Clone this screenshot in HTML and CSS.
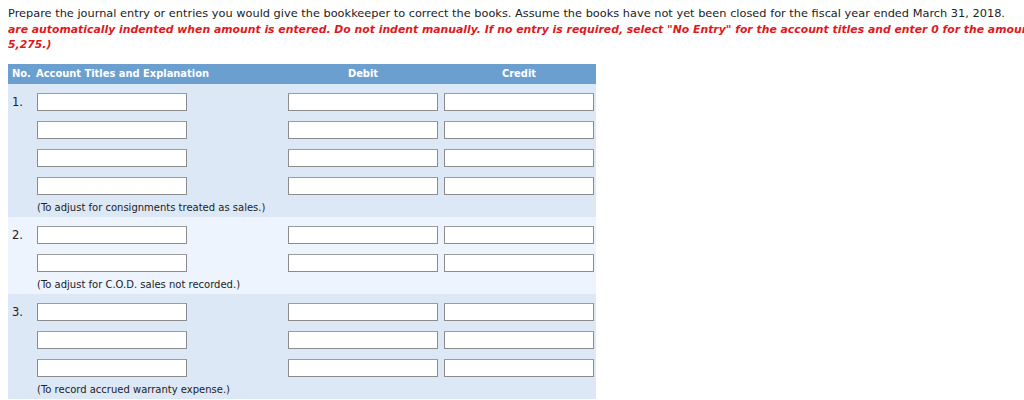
FILE: index.html
```html
<!DOCTYPE html>
<html lang="en">
<head>
<meta charset="utf-8">
<title>Journal entry</title>
<link rel="stylesheet" href="styles.css">
</head>
<body>
<div class="intro">
  <p class="line">Prepare the journal entry or entries you would give the bookkeeper to correct the books. Assume the books have not yet been closed for the fiscal year ended March 31, 2018.</p>
  <p class="line red">are automatically indented when amount is entered. Do not indent manually. If no entry is required, select "No Entry" for the account titles and enter 0 for the amounts.</p>
  <p class="line red">5,275.)</p>
</div>

<div class="journal">
  <div class="head">
    <div class="h-no">No.</div>
    <div class="h-acct">Account Titles and Explanation</div>
    <div class="h-amt">Debit</div>
    <div class="h-amt">Credit</div>
  </div>

  <div class="entry">
    <div class="row"><div class="num">1.</div><input class="field" type="text"><input class="field" type="text"><input class="field" type="text"></div>
    <div class="row"><div class="num"></div><input class="field" type="text"><input class="field" type="text"><input class="field" type="text"></div>
    <div class="row"><div class="num"></div><input class="field" type="text"><input class="field" type="text"><input class="field" type="text"></div>
    <div class="row"><div class="num"></div><input class="field" type="text"><input class="field" type="text"><input class="field" type="text"></div>
    <div class="expl">(To adjust for consignments treated as sales.)</div>
  </div>

  <div class="entry alt">
    <div class="row"><div class="num">2.</div><input class="field" type="text"><input class="field" type="text"><input class="field" type="text"></div>
    <div class="row"><div class="num"></div><input class="field" type="text"><input class="field" type="text"><input class="field" type="text"></div>
    <div class="expl">(To adjust for C.O.D. sales not recorded.)</div>
  </div>

  <div class="entry">
    <div class="row"><div class="num">3.</div><input class="field" type="text"><input class="field" type="text"><input class="field" type="text"></div>
    <div class="row"><div class="num"></div><input class="field" type="text"><input class="field" type="text"><input class="field" type="text"></div>
    <div class="row"><div class="num"></div><input class="field" type="text"><input class="field" type="text"><input class="field" type="text"></div>
    <div class="expl">(To record accrued warranty expense.)</div>
  </div>
</div>
</body>
</html>
```

FILE: styles.css
```css
html, body {
  overflow: hidden;
}
body {
  margin: 0;
  padding: 6px 8px 0 8px;
  background: #ffffff;
  color: #222222;
  font-family: "DejaVu Sans", Verdana, sans-serif;
}
.intro {
  margin-bottom: 11px;
}
.line {
  margin: 0;
  font-size: 11.35px;
  line-height: 15.5px;
  white-space: nowrap;
}
.red {
  color: #e0191b;
  font-size: 10.85px;
  font-weight: bold;
  font-style: italic;
}
.journal {
  width: 588px;
}
.head {
  display: grid;
  grid-template-columns: 28px 252px 156px 152px;
  align-items: center;
  height: 20px;
  background: #6b9fd0;
  color: #ffffff;
  font-family: "DejaVu Sans Condensed", "DejaVu Sans", sans-serif;
  font-stretch: condensed;
  font-size: 11px;
  font-weight: bold;
}
.h-no {
  padding-left: 4px;
}
.h-amt {
  width: 150px;
  text-align: center;
}
.entry {
  background: #dde8f7;
  padding: 9px 0 2px 0;
  display: flex;
  flex-direction: column;
  gap: 10px;
}
.entry.alt {
  background: #eef4fd;
}
.row {
  display: grid;
  grid-template-columns: 29px 251px 156px 152px;
  align-items: center;
  height: 18px;
}
.num {
  padding-left: 4px;
  font-size: 11.5px;
  color: #222222;
}
.field {
  box-sizing: border-box;
  width: 150px;
  height: 18px;
  margin: 0;
  padding: 0 3px;
  border: 1px solid #8c8c8c;
  border-top-color: #9c9c9c;
  background: #ffffff;
  font-family: inherit;
  font-size: 11px;
}
.expl {
  margin-top: -4px;
  padding-left: 29px;
  font-size: 10px;
  line-height: 14px;
  color: #222222;
}
```
